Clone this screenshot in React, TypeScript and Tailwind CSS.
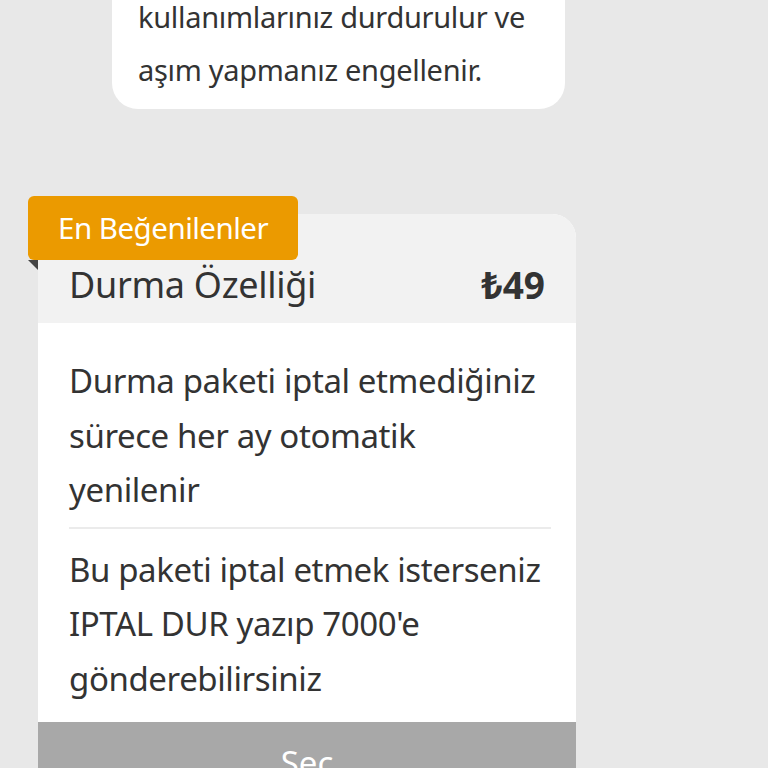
export default function App() {
  const font = { fontFamily: '"Noto Sans", "Open Sans", sans-serif' }
  return (
    <div className="w-[768px] h-[768px] overflow-hidden bg-[#e8e8e8] text-[#333333]" style={font}>
      <div className="ml-[112px] w-[453px] -mt-[10px] bg-white rounded-b-[26px] px-[26px] pb-[13px]">
        <p className="text-[29px] leading-[53px] tracking-[-0.3px]">
          kullanımlarınız durdurulur ve
          <br />
          aşım yapmanız engellenir.
        </p>
      </div>

      <div className="relative ml-[38px] mt-[105px] w-[538px]">
        <div className="absolute -left-[10px] -top-[18px] z-10">
          <div className="h-[64px] w-[270px] rounded-[6px] bg-[#eb9a00] flex items-center pl-[30px] text-white text-[29.5px] tracking-[-0.5px]">
            En Beğenilenler
          </div>
          <div className="w-0 h-0 border-t-[10px] border-t-[#444444] border-l-[10px] border-l-transparent" />
        </div>
        <div className="bg-white rounded-t-[24px] overflow-hidden">
          <div className="h-[109px] bg-[#f2f2f2] flex items-end justify-between px-[31px] pb-[16px]">
            <span className="text-[36px] leading-[44px] tracking-[-0.3px]">Durma Özelliği</span>
            <span className="text-[37px] leading-[44px] font-bold">₺49</span>
          </div>
          <div className="px-[31px] pt-[31px]">
            <p className="text-[33px] leading-[54.5px] tracking-[-0.4px] pb-[9px] max-w-[470px]">
              Durma paketi iptal etmediğiniz sürece her ay otomatik yenilenir
            </p>
            <div className="h-[2px] bg-[#ebebeb] mr-[-6px]" />
            <p className="text-[33px] leading-[54.5px] tracking-[-0.4px] pt-[14px] pb-[16px] max-w-[482px]">
              Bu paketi iptal etmek isterseniz IPTAL DUR yazıp 7000'e gönderebilirsiniz
            </p>
          </div>
          <div className="h-[80px] bg-[#a8a8a8] flex justify-center pt-[16px] text-white text-[33px]">
            Seç
          </div>
        </div>
      </div>
    </div>
  )
}
